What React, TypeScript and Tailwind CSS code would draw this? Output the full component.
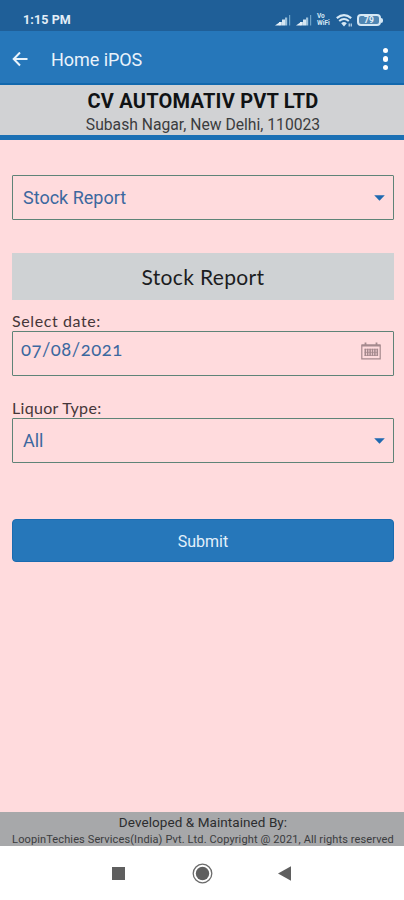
import type { ReactNode } from "react"

function SignalIcon() {
  return (
    <svg width="16" height="12" viewBox="0 0 16 12">
      <path d="M0 11.5 L4.3 8.5 V11.5 Z" fill="#e6f1f9" />
      <path d="M4 8 H6.8 V11.5 H4 Z" fill="#e6f1f9" />
      <path d="M7 5.5 H10 V11.5 H7 Z" fill="#d5e6f2" />
      <path d="M10 3.5 H12.2 V11.5 H10 Z" fill="#9fc3dd" />
      <path d="M14 1 H15.2 V11.5 H14 Z" fill="#6fa3c9" />
    </svg>
  )
}

function WifiIcon() {
  return (
    <svg width="17" height="13" viewBox="0 0 17 13" fill="none" stroke="#d5e8f5">
      <path d="M0.8 4.2 Q8 -1.8 15.2 4.2" strokeWidth="2.2" />
      <path d="M3.2 7 Q8 3 12.8 7" strokeWidth="2" />
      <path d="M5.2 9.2 L8 12.5 L10.8 9.2 Q8 7 5.2 9.2 Z" fill="#d5e8f5" stroke="none" />
      <path d="M13.2 9.5 V12.5 M15.2 9.5 V12.5" strokeWidth="1.1" />
    </svg>
  )
}

function StatusBar() {
  return (
    <div className="flex h-[31px] shrink-0 items-center bg-[#1f5f98] pt-[9px] pr-[21px] pl-[23px]">
      <span className="text-[12.5px] leading-none font-bold tracking-[0.1px] text-[#e3eef7]">1:15 PM</span>
      <div className="ml-auto flex items-center">
        <SignalIcon />
        <span className="w-[5px]" />
        <SignalIcon />
        <div className="ml-[5px] w-[15px] text-[6.5px] leading-[7px] font-bold text-[#d5e8f5]">
          <div>Vo</div>
          <div>WiFi</div>
        </div>
        <span className="w-[4px]" />
        <WifiIcon />
        <div className="ml-[4px] flex h-[12px] w-[24px] items-center justify-center rounded-[4px] border-2 border-[#d5e8f5] bg-[#4f86b3] text-[8.5px] leading-none font-bold text-[#e0eef8]">
          79
        </div>
        <span className="h-[5px] w-[2px] rounded-r bg-[#d5e8f5]" />
      </div>
    </div>
  )
}

function AppBar() {
  return (
    <div className="flex h-[54px] shrink-0 items-center border-b-2 border-[#1268ad] bg-[#2677ba] pt-[4px] pr-[16px] pl-[12px]">
      <svg width="16" height="15" viewBox="0 0 16 15" fill="none" stroke="#e9f3fb" strokeWidth="2">
        <path d="M15.5 7 H2 M8 0.5 L1.7 7 L8 13.5" />
      </svg>
      <h1 className="ml-[23px] pt-[2px] text-[18px] leading-none tracking-[-0.05px] text-[#e9f3fb]">Home iPOS</h1>
      <div className="ml-auto flex flex-col gap-[3px]">
        <span className="size-[5.5px] rounded-full bg-white" />
        <span className="size-[5.5px] rounded-full bg-white" />
        <span className="size-[5.5px] rounded-full bg-white" />
      </div>
    </div>
  )
}

function SelectBox({ children }: { children: ReactNode }) {
  return (
    <div className="flex h-[45px] shrink-0 items-center justify-between rounded-[1px] border border-[#5f8377] pr-[8px] pl-[10px] text-[18px] text-[#3c689f]">
      <span className="leading-none">{children}</span>
      <svg width="11" height="6" viewBox="0 0 11 6">
        <path d="M0.2 0.3 H10.8 L5.5 5.8 Z" fill="#1f69b0" />
      </svg>
    </div>
  )
}

function CalendarIcon() {
  return (
    <svg width="20" height="18" viewBox="0 0 20 18" fill="none" stroke="#a58a8e">
      <path d="M0.8 3 H19.2 V16.8 H0.8 Z" strokeWidth="1.2" />
      <path d="M0.8 3.5 H19.2" strokeWidth="2" />
      <path d="M4.5 0.5 V4 M15.5 0.5 V4" strokeWidth="1.8" />
      <path d="M4.3 6.8 V14 M6.7 6.8 V14 M9.1 6.8 V14 M11.5 6.8 V14 M13.9 6.8 V14 M16.3 6.8 V14" strokeWidth="1.6" />
      <path d="M3.6 7.3 H17 M3.6 10.4 H17 M3.6 13.5 H17" strokeWidth="0.7" />
    </svg>
  )
}

export default function App() {
  return (
    <div className="flex h-[900px] w-[404px] flex-col overflow-hidden bg-[#ffdbdd] font-[Roboto,sans-serif]">
      <StatusBar />
      <AppBar />
      <header className="flex h-[55px] shrink-0 flex-col items-center border-b-[5px] border-[#1b70b4] bg-[#d1d2d4] pl-[2px] whitespace-nowrap">
        <h2 className="mt-[5px] text-[20px] leading-[22px] font-bold tracking-[0.23px] text-[#101214]">
          CV AUTOMATIV PVT LTD
        </h2>
        <p className="mt-[3px] text-[15.7px] leading-[20px] text-[#3b3c3e]">Subash Nagar, New Delhi, 110023</p>
      </header>

      <main className="flex flex-1 flex-col pt-[35px] pr-[10px] pl-[12px]">
        <SelectBox>Stock Report</SelectBox>
        <div className="mt-[33px] flex h-[47px] items-center justify-center bg-[#cfd2d4] font-[Lato,sans-serif] text-[21px] tracking-[0.35px] text-[#1c1d1f]">
          Stock Report
        </div>
        <label className="mt-[11px] h-[20px] font-[Lato,sans-serif] text-[16px] leading-[19px] tracking-[0.6px] text-[#453639]">
          Select date:
        </label>
        <div className="flex h-[45px] items-center justify-between rounded-[1px] border border-[#5f8377] pr-[12px] pb-[6px] pl-[8px]">
          <span className="pb-[2px] font-[Lato,sans-serif] text-[18.5px] leading-none tracking-[0.5px] text-[#3c689f] oldstyle-nums">
            07/08/2021
          </span>
          <CalendarIcon />
        </div>
        <label className="mt-[21px] h-[21px] font-[Lato,sans-serif] text-[16px] leading-[21px] tracking-[0.3px] text-[#453639]">
          Liquor Type:
        </label>
        <SelectBox>All</SelectBox>
        <button className="mt-[56px] h-[43px] rounded-[4px] border border-[#1a6bb0] bg-[#2677ba] pt-[2px] text-[16px] text-[#e3f0fa]">
          Submit
        </button>
      </main>

      <footer className="flex h-[34px] shrink-0 flex-col items-center bg-[#a7a8aa] pl-[2px] whitespace-nowrap text-[#2c2d2f]">
        <div className="mt-[1px] text-[13.5px] leading-[18px] tracking-[0.07px]">Developed &amp; Maintained By:</div>
        <div className="text-[11px] leading-[17px] tracking-[0.12px] text-[#3a3b3d]">
          LoopinTechies Services(India) Pvt. Ltd. Copyright @ 2021, All rights reserved
        </div>
      </footer>

      <nav className="flex h-[54px] shrink-0 items-center bg-white pl-[112px]">
        <span className="size-[13px] bg-[#5f5f5f]" />
        <svg className="ml-[67px]" width="21" height="21" viewBox="0 0 21 21">
          <circle cx="10.5" cy="10.5" r="9.3" fill="none" stroke="#6b6b6b" strokeWidth="1.3" />
          <circle cx="10.5" cy="10.5" r="6.7" fill="#5f5f5f" />
        </svg>
        <svg className="ml-[65px]" width="13" height="15" viewBox="0 0 13 15">
          <path d="M0 7.5 L13 0.3 V14.7 Z" fill="#5f5f5f" />
        </svg>
      </nav>
    </div>
  )
}
